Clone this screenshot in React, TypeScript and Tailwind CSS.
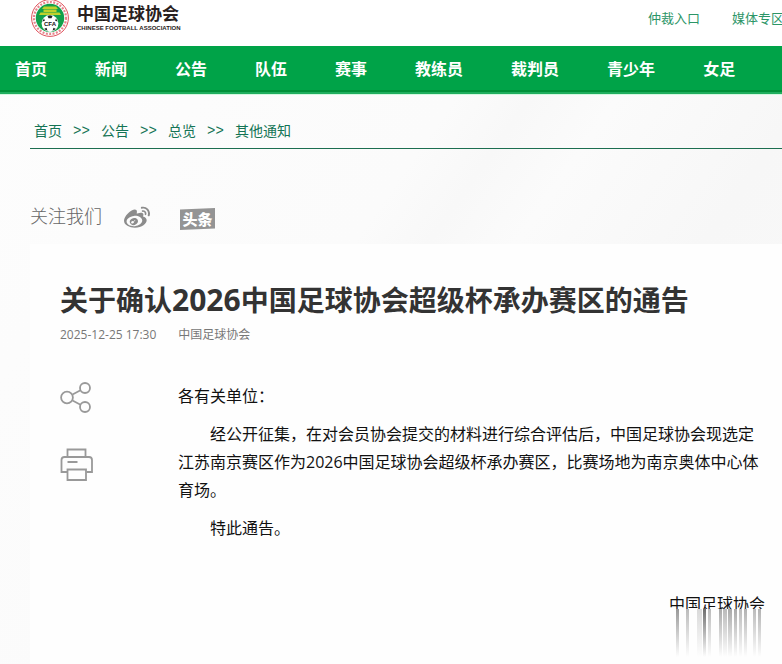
import { FaWeibo } from "react-icons/fa";

const navItems = ["首页", "新闻", "公告", "队伍", "赛事", "教练员", "裁判员", "青少年", "女足"];
const crumbs = ["首页", "公告", "总览", "其他通知"];

const streaks = [
  { x: 7, w: 3, o: 0.6 },
  { x: 17, w: 3, o: 0.4 },
  { x: 28, w: 5, o: 0.22 },
  { x: 34, w: 3, o: 0.85 },
  { x: 39, w: 3, o: 0.4 },
  { x: 50, w: 3, o: 0.5 },
  { x: 54, w: 4, o: 0.4 },
  { x: 59, w: 4, o: 0.5 },
  { x: 65, w: 3, o: 0.5 },
  { x: 70, w: 3, o: 0.4 },
  { x: 75, w: 3, o: 0.45 },
  { x: 84, w: 3, o: 0.4 },
  { x: 89, w: 3, o: 0.45 },
];

function Emblem() {
  return (
    <svg viewBox="0 1 38 38" className="h-[38px] w-[38px] shrink-0" role="img" aria-label="中国足球协会">
      <circle cx="19" cy="19" r="18.4" fill="#fff" stroke="#e0525c" strokeWidth="1" />
      <circle cx="19" cy="19" r="16" fill="none" stroke="#d9434e" strokeWidth="2.2" strokeDasharray="2 1.4" opacity=".65" />
      <circle cx="19" cy="19" r="14.2" fill="#12a04b" />
      <path d="M13 7.500h12l2 2.500H11zM12.500 10.500h13V13h-13zM9.500 13.500h19l1.500 2.500H8z" fill="#c0d12c" />
      <circle cx="19" cy="24.500" r="8.400" fill="#fff" />
      <path d="M16.500 17l2.500-.8 2.500.8-1 2.300h-3zM11.300 22.500l1.700-3 .9 2.300zM26.700 22.500l-1.700-3-.9 2.300zM13 30l2.500-1.200 1 3zM25 30l-2.500-1.200-1 3z" fill="#222" />
      <text x="19" y="27" textAnchor="middle" fontFamily="Liberation Sans, sans-serif" fontWeight="700" fontSize="6" fill="#111">CFA</text>
    </svg>
  );
}

function ToutiaoIcon() {
  return (
    <svg viewBox="0 0 36 24" className="h-6 w-9" aria-hidden="true">
      <path d="M0 2.500L35 1v20.500L0 23z" fill="#949494" />
      <text x="17.500" y="17.500" textAnchor="middle" fontFamily="Noto Sans CJK SC, sans-serif" fontWeight="900" fontSize="15" fill="#fff">头条</text>
    </svg>
  );
}

function ShareIcon() {
  return (
    <svg viewBox="0 0 34 32" className="h-8 w-[34px]" fill="none" stroke="#999" strokeWidth="1.800" aria-hidden="true">
      <circle cx="7" cy="16.500" r="5.900" />
      <circle cx="25" cy="7" r="5" />
      <circle cx="25" cy="26" r="5" />
      <path d="M12.500 13.500l8-4.200M12.500 19.500l8 4.200" />
    </svg>
  );
}

function PrintIcon() {
  return (
    <svg viewBox="0 0 34 34" className="h-[34px] w-[34px]" fill="none" stroke="#999" strokeWidth="1.800" aria-hidden="true">
      <path d="M7.500 9V1.500h18V9" />
      <path d="M7 24H1.500V12q0-3 3-3h24.500q3 0 3 3v12H26.500" />
      <path d="M7.500 21.500h18.500V32H7.500zM7.500 14h10" />
    </svg>
  );
}

export default function App() {
  return (
    <div className="min-h-screen overflow-hidden bg-[linear-gradient(125deg,#fdfdfd_0%,#fbfbfb_42%,#f8f8f8_48%,#fbfbfb_55%,#f7f7f7_70%,#fafafa_100%)] font-['Open_Sans','Noto_Sans_CJK_SC',sans-serif]">
      <header>
        <div className="flex h-[46px] items-start justify-between overflow-hidden bg-white pl-[31px]">
          <a href="#home" className="flex items-start gap-2">
            <Emblem />
            <span className="flex flex-col whitespace-nowrap text-[#282020]">
              <span className="mt-1 text-[17px] leading-5 font-bold">中国足球协会</span>
              <span className="font-['Liberation_Sans',sans-serif] text-[6px] leading-2 font-bold">CHINESE FOOTBALL ASSOCIATION</span>
            </span>
          </a>
          <div className="-mr-0.5 flex gap-8 pt-2 text-[13px] leading-5 whitespace-nowrap text-[#2c9567]">
            <a href="#arbitration">仲裁入口</a>
            <a href="#media">媒体专区</a>
          </div>
        </div>
        <nav className="h-12 overflow-hidden border-b-2 border-[#20ae5e] bg-[#00a348]">
          <ul className="flex h-full items-center gap-12 border-b-2 border-[#009139] pt-0.5 pl-[15px] text-base leading-6 font-bold whitespace-nowrap text-white">
            {navItems.map((item) => (
              <li key={item}>
                <a href="#nav">{item}</a>
              </li>
            ))}
          </ul>
        </nav>
      </header>

      <div className="border-t border-[#d5f8e0] pl-[30px]">
        <nav aria-label="面包屑" className="border-b border-b-[#1c6e50] pt-[26px] pb-[7px] pl-1">
          <ol className="flex text-sm leading-5 text-[#147455]">
            {crumbs.map((item, i) => (
              <li key={item} className="flex">
                {i > 0 && <span className="w-[39px] text-center font-['Liberation_Mono',monospace]">&gt;&gt;</span>}
                <a href="#crumb">{item}</a>
              </li>
            ))}
          </ol>
        </nav>

        <div className="flex h-[95px] items-end pb-[13px] text-[#666]">
          <span className="pb-px text-[18px] leading-7 font-light">关注我们</span>
          <a href="#weibo" aria-label="微博" className="ml-[22px]">
            <FaWeibo className="h-[26px] w-[26px] text-[#8c8c8c]" />
          </a>
          <a href="#toutiao" aria-label="头条" className="ml-[30px]">
            <ToutiaoIcon />
          </a>
        </div>

        <main className="min-h-[420px] bg-[#fefefe] pt-9 pr-[17px] pl-[30px]">
          <h1 className="text-[28px] leading-10 font-bold text-[#333]">
            关于确认<span className="text-[30px] leading-8">2026</span>中国足球协会超级杯承办赛区的通告
          </h1>
          <div className="mt-[5px] flex gap-[22px] text-xs leading-5 text-[#777]">
            <time>2025-12-25 17:30</time>
            <span>中国足球协会</span>
          </div>

          <div className="mt-9 flex">
            <div className="flex w-[118px] shrink-0 flex-col items-start gap-[35px]">
              <button type="button" aria-label="分享">
                <ShareIcon />
              </button>
              <button type="button" aria-label="打印">
                <PrintIcon />
              </button>
            </div>
            <article className="flex-1 pt-px text-base leading-7 text-[#111]">
              <p>各有关单位：</p>
              <p className="mt-2.5 indent-8">经公开征集，在对会员协会提交的材料进行综合评估后，中国足球协会现选定江苏南京赛区作为2026中国足球协会超级杯承办赛区，比赛场地为南京奥体中心体育场。</p>
              <p className="mt-2.5 indent-8">特此通告。</p>
              <div className="mt-12 ml-auto w-24">
                <p className="h-[19px] overflow-hidden whitespace-nowrap">中国足球协会</p>
                <svg viewBox="0 0 96 48" className="h-12 w-24" aria-hidden="true">
                  <defs>
                    <linearGradient id="fade" x1="0" y1="0" x2="0" y2="48" gradientUnits="userSpaceOnUse">
                      <stop offset="0" stopColor="#555" />
                      <stop offset="1" stopColor="#555" stopOpacity="0" />
                    </linearGradient>
                  </defs>
                  {streaks.map((s) => (
                    <rect key={s.x} x={s.x} y="0" width={s.w} height="48" fill="url(#fade)" opacity={s.o} />
                  ))}
                </svg>
              </div>
            </article>
          </div>
        </main>
      </div>
    </div>
  );
}
